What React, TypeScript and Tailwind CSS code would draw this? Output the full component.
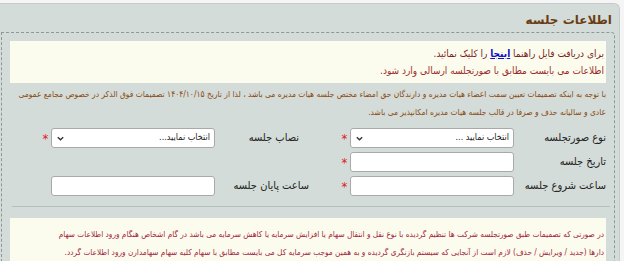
import React from 'react';

const font = { fontFamily: '"DejaVu Sans", Tahoma, sans-serif' };
const cond = { fontFamily: '"DejaVu Sans Condensed", "DejaVu Sans", sans-serif' };

const Star = () => <span className="w-[11px] text-center text-[13px] leading-none text-[#e02020]">*</span>;
const Empty = () => <span className="w-[11px]" />;

const Select = ({ text }: { text: string }) => (
  <div className="flex h-[20px] w-[164px] items-center justify-between rounded-[3px] border border-[#a9a9a9] bg-white px-[4px] text-[9px] text-[#222]">
    <span>{text}</span>
    <svg width="9" height="9" viewBox="0 0 10 10" className="text-[#333]">
      <path d="M2 3.5 L5 6.5 L8 3.5" fill="none" stroke="currentColor" strokeWidth="1.5" />
    </svg>
  </div>
);

const Input = () => <div className="h-[20px] w-[164px] rounded-[3px] border border-[#a9a9a9] bg-white" />;

export default function App() {
  return (
    <div dir="rtl" className="h-[261px] w-[624px] overflow-hidden bg-[#f4f5f4] pt-[3px]" style={font}>
      <div className="mr-[4px] h-[258px] rounded-tr-[6px] border-r border-t border-[#c4ccc9] bg-[#d4dcd9]">
        <div className="h-[28px] pr-[7px] pt-[9px] text-[12px] font-bold leading-[14px] text-[#6b3d14]">اطلاعات جلسه</div>
        <div className="ml-[1px] mr-[4px] h-[230px] rounded-tr-[4px] border-r border-t border-l border-dashed border-[#8f9794] px-[8px] pt-[8px]" style={cond}>
          <div className="flex h-[42px] flex-col justify-center gap-[4px] bg-[#fcfcee] px-[2px] text-[10px] leading-[13px]">
            <div className="text-[#7a1f1f]">
              برای دریافت فایل راهنما <span className="font-bold text-[#1010c8] underline">اینجا</span> را کلیک نمائید.
            </div>
            <div className="text-[#9b2c2c]">اطلاعات می بایست مطابق با صورتجلسه ارسالی وارد شود.</div>
          </div>
          <div className="mt-[2px] text-[8.4px] leading-[18px] text-[#8a4a12]">
            <div>با توجه به اینکه تصمیمات تعیین سمت اعضاء هیات مدیره و دارندگان حق امضاء مختص جلسه هیات مدیره می باشد ، لذا از تاریخ ۱۴۰۴/۱۰/۱۵ تصمیمات فوق الذکر در خصوص مجامع عمومی</div>
            <div>عادی و سالیانه حذف و صرفا در قالب جلسه هیات مدیره امکانپذیر می باشد.</div>
          </div>
          <div className="mt-[7px] flex flex-col gap-[4px] text-[11px] text-[#222]">
            <div className="flex h-[20px] items-center">
              <div className="w-[92px]">نوع صورتجلسه</div>
              <Select text="انتخاب نمایید ..." />
              <Star />
              <div className="w-[124px] pr-[40px]">نصاب جلسه</div>
              <Select text="انتخاب نمایید..." />
              <Star />
            </div>
            <div className="flex h-[20px] items-center">
              <div className="w-[92px]">تاریخ جلسه</div>
              <Input />
              <Star />
            </div>
            <div className="flex h-[20px] items-center">
              <div className="w-[92px]">ساعت شروع جلسه</div>
              <Input />
              <Star />
              <div className="w-[124px] pr-[30px]">ساعت پایان جلسه</div>
              <Input />
              <Empty />
            </div>
          </div>
          <div className="ml-[2px] mr-[-4px] mt-[10px] border-t border-[#b7bfbc]" />
          <div className="mt-[11px] flex h-[50px] flex-col justify-center bg-[#fcfcee] px-[2px] text-[8.2px] leading-[18px] text-[#a3263f]">
            <div>در صورتی که تصمیمات طبق صورتجلسه شرکت ها تنظیم گردیده با نوع نقل و انتقال سهام یا افزایش سرمایه یا کاهش سرمایه می باشد در گام اشخاص هنگام ورود اطلاعات سهام</div>
            <div>دارها (جدید / ویرایش / حذف) لازم است از آنجایی که سیستم بازنگری گردیده و به همین موجب سرمایه کل می بایست مطابق با سهام کلیه سهام سهامدارن ورود اطلاعات گردد.</div>
          </div>
        </div>
      </div>
    </div>
  );
}
